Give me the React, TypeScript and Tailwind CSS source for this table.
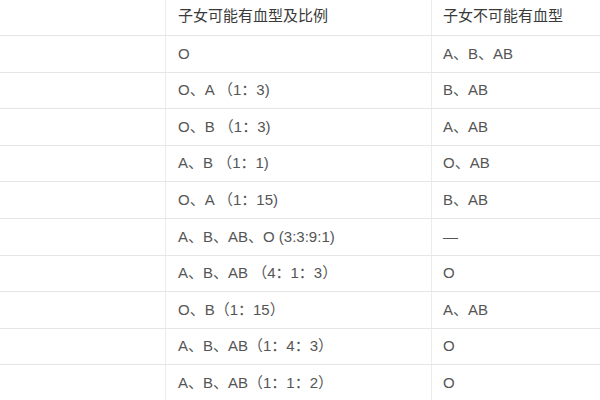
import React from "react";

const rows: [string, string][] = [
  ["O", "A、B、AB"],
  ["O、A （1：3)", "B、AB"],
  ["O、B （1：3)", "A、AB"],
  ["A、B （1：1)", "O、AB"],
  ["O、A （1：15)", "B、AB"],
  ["A、B、AB、O (3:3:9:1)", "—"],
  ["A、B、AB （4：1：3）", "O"],
  ["O、B（1：15）", "A、AB"],
  ["A、B、AB（1：4：3）", "O"],
  ["A、B、AB（1：1：2）", "O"],
];

export default function App() {
  return (
    <div
      className="w-[600px] h-[400px] overflow-hidden bg-white"
      style={{ fontFamily: '"Liberation Sans", "Noto Sans CJK SC", sans-serif' }}
    >
      <div className="grid grid-cols-[166px_266px_1fr] h-[36px] border-b border-[#e6e6e6]">
        <div className="border-r border-[#ececec]" />
        <div className="border-r border-[#ececec] flex items-center pl-[12px] pb-[3px] text-[15px] text-[#3a3a3a]">
          子女可能有血型及比例
        </div>
        <div className="flex items-center pl-[11px] pb-[3px] text-[15px] text-[#3a3a3a]">
          子女不可能有血型
        </div>
      </div>
      {rows.map(([a, b], i) => (
        <div
          key={i}
          className="grid grid-cols-[166px_266px_1fr] h-[36.6px] border-b border-[#e6e6e6]"
        >
          <div className="border-r border-[#ececec]" />
          <div className="border-r border-[#ececec] flex items-center pl-[12px] text-[15px] text-[#555555] whitespace-pre">
            {a}
          </div>
          <div className="flex items-center pl-[11px] text-[15px] text-[#555555] whitespace-pre">
            {b}
          </div>
        </div>
      ))}
    </div>
  );
}
